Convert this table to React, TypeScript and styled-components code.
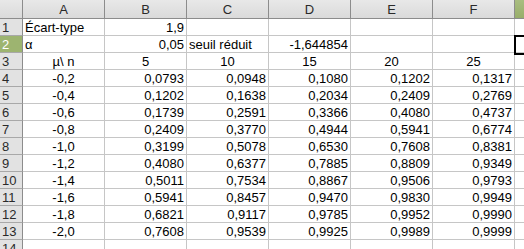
import { Fragment } from 'react';
import styled, { createGlobalStyle } from 'styled-components';

const Global = createGlobalStyle`
  html, body {
    margin: 0;
    padding: 0;
    background: #fff;
    overflow: hidden;
  }
`;

const Sheet = styled.div`
  display: grid;
  grid-template-columns: 23px repeat(6, 82px) 40px;
  grid-template-rows: 19px repeat(14, 17px);
  font-family: "Liberation Sans", Arial, sans-serif;
  font-size: 13px;
  color: #000;
  width: 524px;
  height: 249px;
  overflow: hidden;
  position: relative;
`;

const ColHead = styled.div<{ $sel?: boolean }>`
  background: ${p => (p.$sel ? 'linear-gradient(#a9bd80, #98ae6a)' : 'linear-gradient(#e8e8e8, #dadada)')};
  border-right: 1px solid #8c8c8c;
  border-bottom: 1px solid #8c8c8c;
  color: #2a2a2a;
  display: flex;
  align-items: center;
  justify-content: center;
  line-height: 1;
  padding-top: 1px;
`;

const RowHead = styled.div<{ $sel?: boolean }>`
  background: ${p => (p.$sel ? '#9db470' : '#e2e2e2')};
  border-right: 1px solid #8c8c8c;
  border-bottom: 1px solid #a8a8a8;
  color: ${p => (p.$sel ? '#fff' : '#2a2a2a')};
  display: flex;
  align-items: center;
  padding-left: 2px;
  white-space: nowrap;
  overflow: hidden;
`;

const Cell = styled.div<{ $align?: 'left' | 'right' | 'center' }>`
  border-right: 1px solid #c6c6c6;
  border-bottom: 1px solid #c6c6c6;
  display: flex;
  align-items: center;
  justify-content: ${p => (p.$align === 'right' ? 'flex-end' : p.$align === 'center' ? 'center' : 'flex-start')};
  padding: 0 2px;
  white-space: nowrap;
  line-height: 1;
`;

// cell cursor on G2, drawn over the grid
const Cursor = styled.div`
  position: absolute;
  left: 514px;
  top: 35px;
  width: 30px;
  height: 16px;
  border: 2px solid #000;
`;

const cols = ['A', 'B', 'C', 'D', 'E', 'F'];

type Align = 'left' | 'right' | 'center';
type C = { v: string; a?: Align };

const table: { v: string; vals: string[] }[] = [
  { v: '-0,2', vals: ['0,0793', '0,0948', '0,1080', '0,1202', '0,1317'] },
  { v: '-0,4', vals: ['0,1202', '0,1638', '0,2034', '0,2409', '0,2769'] },
  { v: '-0,6', vals: ['0,1739', '0,2591', '0,3366', '0,4080', '0,4737'] },
  { v: '-0,8', vals: ['0,2409', '0,3770', '0,4944', '0,5941', '0,6774'] },
  { v: '-1,0', vals: ['0,3199', '0,5078', '0,6530', '0,7608', '0,8381'] },
  { v: '-1,2', vals: ['0,4080', '0,6377', '0,7885', '0,8809', '0,9349'] },
  { v: '-1,4', vals: ['0,5011', '0,7534', '0,8867', '0,9506', '0,9793'] },
  { v: '-1,6', vals: ['0,5941', '0,8457', '0,9470', '0,9830', '0,9949'] },
  { v: '-1,8', vals: ['0,6821', '0,9117', '0,9785', '0,9952', '0,9990'] },
  { v: '-2,0', vals: ['0,7608', '0,9539', '0,9925', '0,9989', '0,9999'] },
];

const empty: C[] = cols.map(() => ({ v: '' }));

const rows: C[][] = [
  [{ v: 'Écart-type' }, { v: '1,9', a: 'right' }, { v: '' }, { v: '' }, { v: '' }, { v: '' }],
  [{ v: 'α' }, { v: '0,05', a: 'right' }, { v: 'seuil réduit' }, { v: '-1,644854', a: 'right' }, { v: '' }, { v: '' }],
  [
    { v: 'µ\\ n', a: 'center' },
    { v: '5', a: 'center' },
    { v: '10', a: 'center' },
    { v: '15', a: 'center' },
    { v: '20', a: 'center' },
    { v: '25', a: 'center' },
  ],
  ...table.map(r => [{ v: r.v, a: 'center' as Align }, ...r.vals.map(x => ({ v: x, a: 'right' as Align }))]),
  empty,
];

export default function App() {
  return (
    <>
      <Global />
      <Sheet>
        <ColHead />
        {cols.map(c => (
          <ColHead key={c}>{c}</ColHead>
        ))}
        <ColHead $sel />
        {rows.map((r, i) => (
          <Fragment key={i}>
            <RowHead $sel={i === 1}>{i + 1}</RowHead>
            {r.map((c, j) => (
              <Cell key={j} $align={c.a}>{c.v}</Cell>
            ))}
            <Cell />
          </Fragment>
        ))}
        <Cursor />
      </Sheet>
    </>
  );
}
